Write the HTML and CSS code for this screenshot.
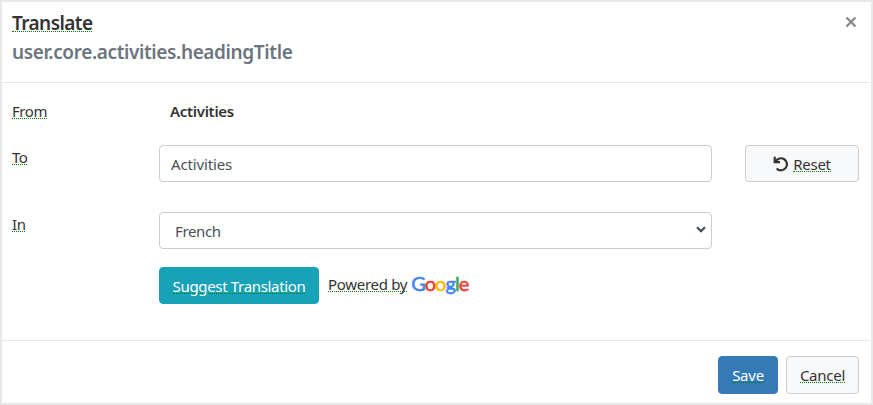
FILE: index.html
```
<!DOCTYPE html>
<html lang="en">
<head>
<meta charset="utf-8">
<title>Translate</title>
<link rel="stylesheet" href="styles.css">
</head>
<body>
<main class="dialog">
  <header class="header">
    <div>
      <h1 class="title"><span class="term">Translate</span></h1>
      <p class="key">user.core.activities.headingTitle</p>
    </div>
    <svg class="close" viewBox="0 0 12 12" width="12" height="12" role="img" aria-label="Close"><path d="M1.5 1.5l9 9M10.5 1.5l-9 9"/></svg>
  </header>
  <section class="body">
    <div class="row row-from">
      <div class="label"><span class="term">From</span></div>
      <strong class="source">Activities</strong>
    </div>
    <div class="row row-to">
      <div class="label"><span class="term">To</span></div>
      <div class="field">Activities</div>
      <button class="btn btn-light btn-reset"><svg class="undo" viewBox="0 0 16 16" width="16" height="16"><path d="M2.6 5.6A6 6 0 1 1 3.6 12.4"/><path class="tip" d="M.6.8v6.4H7V5L2.8 4.8V.8z"/></svg><span class="term">Reset</span></button>
    </div>
    <div class="row row-in">
      <div class="label"><span class="term">In</span></div>
      <div class="field select"><span>French</span><svg class="chevron" viewBox="0 0 10 7" width="10" height="7"><path d="M1 1.2l4 3.9 4-3.9"/></svg></div>
    </div>
    <div class="row row-suggest">
      <button class="btn btn-info"><span class="term">Suggest Translation</span></button>
      <div class="powered"><span class="term">Powered by</span><span class="google"><i class="b">G</i><i class="r">o</i><i class="y">o</i><i class="b">g</i><i class="g">l</i><i class="r">e</i></span></div>
    </div>
  </section>
  <footer class="footer">
    <button class="btn btn-primary"><span class="term">Save</span></button>
    <button class="btn btn-light btn-cancel"><span class="term">Cancel</span></button>
  </footer>
</main>
</body>
</html>
```
FILE: styles.css
```
* { box-sizing: border-box; }
body {
  margin: 0;
  background: #fff;
  color: #333;
  font: 15px/22px "Noto Sans", "Open Sans", sans-serif;
  letter-spacing: -.3px;
}
.dialog {
  display: flex;
  flex-direction: column;
  width: 873px;
  height: 405px;
  border: 2px solid #e8e8e8;
}
.term {
  display: inline-block;
  height: 19px;
  line-height: 22px;
  border-bottom: 1px dotted #008000;
}
.header {
  display: flex;
  justify-content: space-between;
  height: 81px;
  margin-right: 1px;
  padding: 10px 13px 0 10px;
  border-bottom: 1px solid #e5e8e8;
}
.title, .key {
  margin: 0;
  font-size: 19px;
  font-weight: 600;
  line-height: 22px;
}
.title { letter-spacing: -.58px; }
.title .term { height: 20px; }
.key { margin-top: 7px; color: #6c757d; letter-spacing: -.38px; }
.close { margin-top: 4px; fill: none; stroke: #8b8b8b; stroke-width: 2.4; }
.body { flex: 1; padding: 0 12px 0 10px; }
.row { display: flex; }
.row-from { height: 62px; padding-top: 17px; }
.row-to { height: 67px; }
.row-in { height: 55px; }
.label { width: 147px; letter-spacing: -.45px; }
.row-to .label, .row-in .label { padding-top: 1px; }
.source { margin-left: 11px; font-weight: 600; }
.field {
  display: flex;
  align-items: center;
  width: 553px;
  height: 37px;
  padding: 1px 11px 0;
  border: 1px solid #ccc;
  border-radius: 4px;
  color: #495057;
  letter-spacing: -.15px;
}
.select { justify-content: space-between; padding: 1px 5px 0 15px; letter-spacing: -.35px; }
.chevron { margin-top: -3px; fill: none; stroke: #495057; stroke-width: 2.2; }
.btn {
  display: flex;
  justify-content: center;
  height: 37px;
  padding: 7px 0 0;
  border: 1px solid #ccc;
  border-radius: 4px;
  color: #333;
  font: inherit;
  letter-spacing: -.25px;
}
.btn-light { background: #f8f9fa; }
.btn-reset { width: 114px; margin-left: 33px; gap: 4px; }
.undo { margin-top: 3px; fill: none; stroke: #333; stroke-width: 2.2; }
.undo .tip { fill: #333; stroke: none; }
.row-suggest { padding-left: 147px; }
.btn-info { width: 160px; border-color: #17a2b8; background: #17a2b8; color: #fff; letter-spacing: -.33px; }
.powered { display: flex; margin: 6px 0 0 9px; }
.google {
  margin: -1px 0 0 4px;
  font: 20px/22px "Lato", sans-serif;
  letter-spacing: -.95px;
  -webkit-text-stroke: .6px currentColor;
}
.google i { font-style: normal; }
.b { color: #4285f4; }
.r { color: #ea4335; }
.y { color: #fbbc05; }
.g { color: #34a853; }
.footer {
  display: flex;
  justify-content: flex-end;
  gap: 8px;
  height: 63px;
  margin-right: 1px;
  padding: 15px 11px 0;
  border-top: 1px solid #e8e8e8;
}
.footer .btn { height: 38px; }
.btn-primary { width: 60px; border-color: #337ab7; background: #337ab7; color: #fff; }
.btn-cancel { width: 73px; }
```
